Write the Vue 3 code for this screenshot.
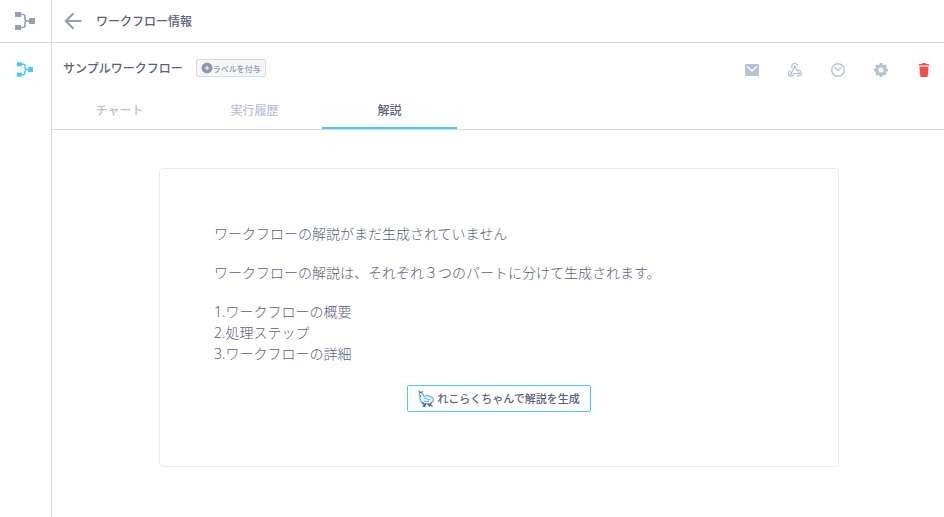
<template>
  <div class="page">
    <!-- サイドバー -->
    <aside class="side">
      <a href="#" class="side_logo" aria-label="ホーム">
        <svg width="20" height="18" viewBox="0 0 20 18">
          <path d="M5 2.5h3q2 0 2 2V7q0 2 2 2h3M5 15.5h3q2 0 2-2V11q0-2 2-2" fill="none" stroke="currentColor" stroke-width="1.6" />
          <path d="M0 0h6v5H0zM0 13h6v5H0zM14 6h6v6h-6z" fill="currentColor" />
        </svg>
      </a>
      <nav class="side_menu">
        <a href="#" class="side_item" aria-label="ワークフロー">
          <svg width="16" height="15" viewBox="0 0 20 18">
            <path d="M5 2.5h3q2 0 2 2V7q0 2 2 2h3M5 15.5h3q2 0 2-2V11q0-2 2-2" fill="none" stroke="currentColor" stroke-width="1.8" />
            <path d="M0 0h6v5H0zM0 13h6v5H0zM14 6h6v6h-6z" fill="currentColor" />
          </svg>
        </a>
      </nav>
    </aside>

    <div class="main">
      <!-- ヘッダー -->
      <header class="header">
        <button type="button" class="icon_btn back" aria-label="戻る">
          <svg width="18" height="18" viewBox="0 0 18 18">
            <path d="M17.500 9H2M9.500 1.300L1.800 9l7.700 7.700" fill="none" stroke="currentColor" stroke-width="2.200" />
          </svg>
        </button>
        <h1>ワークフロー情報</h1>
      </header>

      <!-- ワークフロー名と操作 -->
      <div class="title_box">
        <h2>サンプルワークフロー</h2>
        <button type="button" class="label_btn">
          <svg width="12" height="12" viewBox="0 0 11 11">
            <circle cx="5.500" cy="5.500" r="5" fill="currentColor" />
            <path d="M5.500 3.500v4M3.500 5.500h4" stroke="#f4f6f8" stroke-width="1" />
          </svg>
          ラベルを付与
        </button>
        <div class="actions">
          <button
            v-for="item in actions"
            :key="item.name"
            type="button"
            class="icon_btn"
            :class="{ danger: item.name === 'delete' }"
            :aria-label="item.text"
          >
            <svg v-if="item.name === 'mail'" width="14" height="14" viewBox="0 0 14 14">
              <rect y="1" width="14" height="12" rx="1" fill="currentColor" />
              <path d="M2.300 3.500L7 8l4.700-4.500" fill="none" stroke="#fff" stroke-width="1.200" />
            </svg>
            <svg v-else-if="item.name === 'webhook'" width="14" height="14" viewBox="0 0 14 14">
              <g fill="none" stroke="currentColor" stroke-width="1.200">
                <path d="M4.600 5.500A3 3 0 1 1 9.700 3.500M7 3.700L9.300 7.900A2.700 2.700 0 1 1 8.700 12.200" />
                <path d="M3 7.800A2.700 2.700 0 1 0 5.700 10.500H11M7 3.700L3.200 10.300" />
              </g>
              <g fill="currentColor">
                <circle cx="7" cy="3.700" r="1.200" />
                <circle cx="3.100" cy="10.500" r="1.200" />
                <circle cx="11" cy="10.500" r="1.200" />
              </g>
            </svg>
            <svg v-else-if="item.name === 'schedule'" width="14" height="14" viewBox="0 0 14 14">
              <circle cx="7" cy="7" r="6.300" fill="none" stroke="currentColor" stroke-width="1.400" />
              <path d="M3.700 4.300L6.800 7.500l3.700-3" fill="none" stroke="currentColor" stroke-width="1.400" />
            </svg>
            <svg v-else-if="item.name === 'setting'" width="14" height="14" viewBox="0 0 14 14">
              <circle cx="7" cy="7" r="4" fill="none" stroke="currentColor" stroke-width="3" />
              <path
                v-for="deg in [0, 45, 90, 135, 180, 225, 270, 315]"
                :key="deg"
                d="M5.200 2.500L5.700 0h2.600l.5 2.500z"
                :transform="`rotate(${deg} 7 7)`"
                fill="currentColor"
              />
            </svg>
            <svg v-else width="14" height="14" viewBox="0 0 14 14">
              <path d="M2 1h3l.5-1h3L9 1h3v1H2z" fill="currentColor" />
              <path d="M2 2h10v2H2z" fill="currentColor" opacity="0.4" />
              <path d="M2.500 4h9l-.8 9.200q0 .8-.8.8H4.100q-.8 0-.8-.8z" fill="currentColor" />
            </svg>
          </button>
        </div>
      </div>

      <!-- タブ -->
      <nav class="tabs">
        <button
          v-for="tab in tabs"
          :key="tab"
          type="button"
          :class="{ active: tab === selectTab }"
          @click="selectTab = tab"
        >
          {{ tab }}
        </button>
      </nav>

      <!-- 解説 -->
      <main class="content">
        <section class="card">
          <p>ワークフローの解説がまだ生成されていません</p>
          <p>ワークフローの解説は、それぞれ３つのパートに分けて生成されます。</p>
          <ul>
            <li v-for="(part, index) in parts" :key="part">{{ index + 1 }}.{{ part }}</li>
          </ul>
          <button type="button" class="generate_btn">
            <svg width="16" height="18" viewBox="0 0 16 18">
              <path d="M1 2.500L4 2l2 4.500 4-1 4.500 1.500 1.200 3-1.500 3-3 1H6L2.500 12 1.500 7z" fill="#e3f3fa" stroke="#8fb9d2" stroke-width=".8" />
              <path d="M.8 3.500L2.500 2l1 1.500M.5.500l2 2M4.500.8L3.500 3M2 4.500L2.500 7" fill="none" stroke="#48708f" />
              <path d="M5 3.500l1 3M1.800 8l1.500 4 2.500 1M7 6q2-1 4 0t4.500 2.500L15 11l-2 2M6 8.500q2-1 3 .5t3.500 0M6 11q2 1.500 5 0" fill="none" stroke="#63b7de" />
              <path d="M4 12.500L7 15l-2.500 1.500M8 13l-1.500 4M9.500 13.500l2.500 3M13.500 12.500l-1.500 2 2.500 2" fill="none" stroke="#3d607d" stroke-width="1.200" />
            </svg>
            れこらくちゃんで解説を生成
          </button>
        </section>
      </main>
    </div>
  </div>
</template>

<script setup>
import { ref } from 'vue'

// 操作アイコン
const actions = [
  { name: 'mail', text: 'メール' },
  { name: 'webhook', text: 'Webhook' },
  { name: 'schedule', text: 'スケジュール' },
  { name: 'setting', text: '設定' },
  { name: 'delete', text: '削除' },
]
// タブ
const tabs = ['チャート', '実行履歴', '解説']
const selectTab = ref('解説')
// 解説のパート
const parts = ['ワークフローの概要', '処理ステップ', 'ワークフローの詳細']
</script>

<style>
body {
  margin: 0;
  background-color: #fff;
}
</style>

<style scoped>
.page {
  display: flex;
  min-height: 100vh;
  color: #5a607f;
  font-family: 'Noto Sans', 'Noto Sans CJK JP', sans-serif;
}
button {
  font-family: inherit;
  color: inherit;
  cursor: pointer;
}
svg {
  flex: none;
}
/* サイドバー */
.side {
  flex: none;
  width: 51px;
  border-right: 1px solid #d5d9e2;
}
.side_logo,
.side_item {
  display: flex;
  align-items: center;
  justify-content: center;
  padding-right: 2px;
}
.side_logo {
  height: 42px;
  border-bottom: 1px solid #d5d9e2;
  color: #979eb5;
}
.side_item {
  height: 52px;
  color: #43cbfb;
}
.main {
  flex: 1;
  min-width: 0;
}
/* ヘッダー */
.header {
  display: flex;
  align-items: center;
  gap: 13px;
  height: 42px;
  padding: 0 11px;
  border-bottom: 1px solid #d5d9e2;
}
h1,
h2 {
  margin: 0;
  font-size: 12px;
  font-weight: 500;
  white-space: nowrap;
}
.icon_btn {
  display: flex;
  padding: 0;
  border: none;
  background: none;
  color: #b9c1d5;
}
.back {
  width: 20px;
  justify-content: center;
  color: #979eb5;
}
.danger {
  color: #fc4a4a;
}
/* タイトル */
.title_box {
  display: flex;
  align-items: center;
  height: 50px;
  padding: 0 13px 0 11px;
}
.label_btn {
  display: flex;
  align-items: center;
  height: 18px;
  margin-left: 13px;
  padding: 0 4px;
  border: 1px solid #d5d9e2;
  border-radius: 2px;
  background-color: #f4f6f8;
  color: #8f96ad;
  font-size: 8px;
  font-weight: 500;
  white-space: nowrap;
}
.actions {
  display: flex;
  gap: 29px;
  margin-left: auto;
  padding-top: 4px;
}
/* タブ */
.tabs {
  display: flex;
  border-bottom: 1px solid #d5d9e2;
}
.tabs button {
  width: 135px;
  height: 36px;
  padding: 0;
  border: none;
  border-bottom: 2px solid transparent;
  background: none;
  color: #b9c1d5;
  font-size: 12px;
  font-weight: 500;
}
.tabs .active {
  border-bottom-color: #43cbfb;
  color: #5a607f;
}
/* 解説 */
.content {
  padding: 38px 24px 38px 26px;
}
.card {
  box-sizing: border-box;
  max-width: 680px;
  margin: 0 auto;
  padding: 54px;
  border: 1px solid #e9ebf0;
  border-radius: 4px;
  font-size: 14px;
  font-weight: 300;
  line-height: 21px;
}
.card p {
  margin: 0 0 18px;
}
.card ul {
  margin: 0;
  padding: 0;
  list-style: none;
}
.generate_btn {
  display: flex;
  align-items: center;
  gap: 3px;
  height: 27px;
  margin: 21px auto 0;
  padding: 0 10px;
  border: 1px solid #43cbfb;
  border-radius: 2px;
  background-color: #fff;
  font-size: 11px;
  font-weight: 500;
  line-height: 18px;
  white-space: nowrap;
}
</style>
